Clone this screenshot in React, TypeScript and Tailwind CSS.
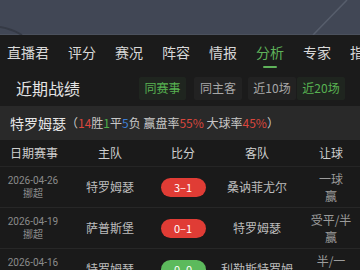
import React from "react";

const font = { fontFamily: '"Noto Sans CJK SC", "Noto Sans", sans-serif' };

const navs = ["直播君", "评分", "赛况", "阵容", "情报", "分析", "专家", "指数"];

type Row = {
  date: string;
  league: string;
  home: string;
  score: string;
  win: "red" | "green";
  away: string;
  hc: string[];
};

const rows: Row[] = [
  { date: "2026-04-26", league: "挪超", home: "特罗姆瑟", score: "3-1", win: "red", away: "桑讷菲尤尔", hc: ["一球", "赢"] },
  { date: "2026-04-19", league: "挪超", home: "萨普斯堡", score: "0-1", win: "red", away: "特罗姆瑟", hc: ["受平/半", "赢"] },
  { date: "2026-04-16", league: "挪超", home: "特罗姆瑟", score: "0-0", win: "green", away: "利勒斯特罗姆", hc: ["半/一", "走"] },
];

export default function App() {
  return (
    <div className="w-[360px] h-[270px] overflow-hidden bg-[#1a1a1a] text-[#d6d6d6]" style={font}>
      {/* header image */}
      <div className="relative h-[35px] bg-[#414755] border-b border-[#4b515d]">
        <svg className="absolute inset-0" width="360" height="35" viewBox="0 0 360 35">
          <line x1="347" y1="0" x2="313" y2="35" stroke="#575e6c" strokeWidth="1.5" />
          <path d="M0 27 Q12 29 22 35" stroke="#353a45" strokeWidth="2" fill="none" />
        </svg>
      </div>
      {/* nav */}
      <div className="relative h-[35px] bg-[#1b1b1b] flex items-center gap-[19px] pl-[7px] whitespace-nowrap text-[14px] text-[#d8d8d8]">
        {navs.map((n) => (
          <div key={n} className={"relative shrink-0 " + (n === "分析" ? "text-[#5fb25a]" : "")}>
            {n}
            {n === "分析" && (
              <div className="absolute left-1/2 -translate-x-1/2 top-[24px] w-[14px] h-[2px] rounded-full bg-[#5fb25a]" />
            )}
          </div>
        ))}
      </div>
      {/* section title */}
      <div className="h-[36px] bg-[#1b1b1b] flex items-center pl-4 pr-[15px]">
        <div className="text-[16px] text-[#e4e4e4]">近期战绩</div>
        <div className="ml-auto flex items-center gap-[8px]">
          <div className="w-[47px] h-[23px] flex items-center justify-center text-[12px] bg-[#1f251f] text-[#58b352] rounded-[2px]">同赛事</div>
          <div className="w-[48px] h-[23px] flex items-center justify-center text-[12px] bg-[#222222] text-[#a8a8a8] rounded-[2px]">同主客</div>
          <div className="flex items-center gap-[1px] ml-[-2px]">
            <div className="w-[48px] h-[23px] flex items-center justify-center text-[12px] bg-[#222222] text-[#a8a8a8] rounded-[2px]">近10场</div>
            <div className="w-[48px] h-[23px] flex items-center justify-center text-[12px] bg-[#1f251f] text-[#58b352] rounded-[2px]">近20场</div>
          </div>
        </div>
      </div>
      {/* team summary */}
      <div className="h-[34px] bg-[#292929] flex items-center pl-[10px] whitespace-nowrap">
        <span className="text-[14px] text-[#e6e6e6]">特罗姆瑟</span>
        <span className="text-[12px] text-[#c8c8c8]">
          （<span className="text-[#d9463d]">14</span>胜<span className="text-[#4fae4a]">1</span>平
          <span className="text-[#3d7fd6]">5</span>负 赢盘率<span className="text-[#d9463d]">55%</span> 大球率
          <span className="text-[#d9463d]">45%</span>）
        </span>
      </div>
      {/* table header */}
      <div className="grid grid-cols-[66px_88px_58px_90px_58px] h-[27px] items-center text-[12px] text-[#cfcfcf] border-b border-[#252525]">
        <div className="pl-[10px]">日期赛事</div>
        <div className="text-center">主队</div>
        <div className="text-center">比分</div>
        <div className="text-center">客队</div>
        <div className="text-center">让球</div>
      </div>
      {rows.map((r) => (
        <div
          key={r.date}
          className="grid grid-cols-[66px_88px_58px_90px_58px] h-[41px] items-center border-b border-[#272727]"
        >
          <div className="flex flex-col items-center text-[10px] leading-[13px] text-[#8b8b8b]" style={{ fontFamily: 'Roboto, "Noto Sans CJK SC", sans-serif' }}>
            <span>{r.date}</span>
            <span>{r.league}</span>
          </div>
          <div className="text-center text-[12px] text-[#bdbdbd] whitespace-nowrap">{r.home}</div>
          <div className="flex justify-center">
            <div
              className={
                "w-[45px] h-[19px] rounded-full flex items-center justify-center text-[11px] text-white " +
                (r.win === "red" ? "bg-[#e03c35]" : "bg-[#5cba5c]")
              }
            >
              {r.score.replace("-", "–")}
            </div>
          </div>
          <div className="text-center text-[12px] text-[#bdbdbd] whitespace-nowrap">{r.away}</div>
          <div className="flex flex-col items-center text-[12px] leading-[17px] text-[#9c9c9c] whitespace-nowrap">
            {r.hc.map((h) => (
              <span key={h}>{h}</span>
            ))}
          </div>
        </div>
      ))}
    </div>
  );
}
